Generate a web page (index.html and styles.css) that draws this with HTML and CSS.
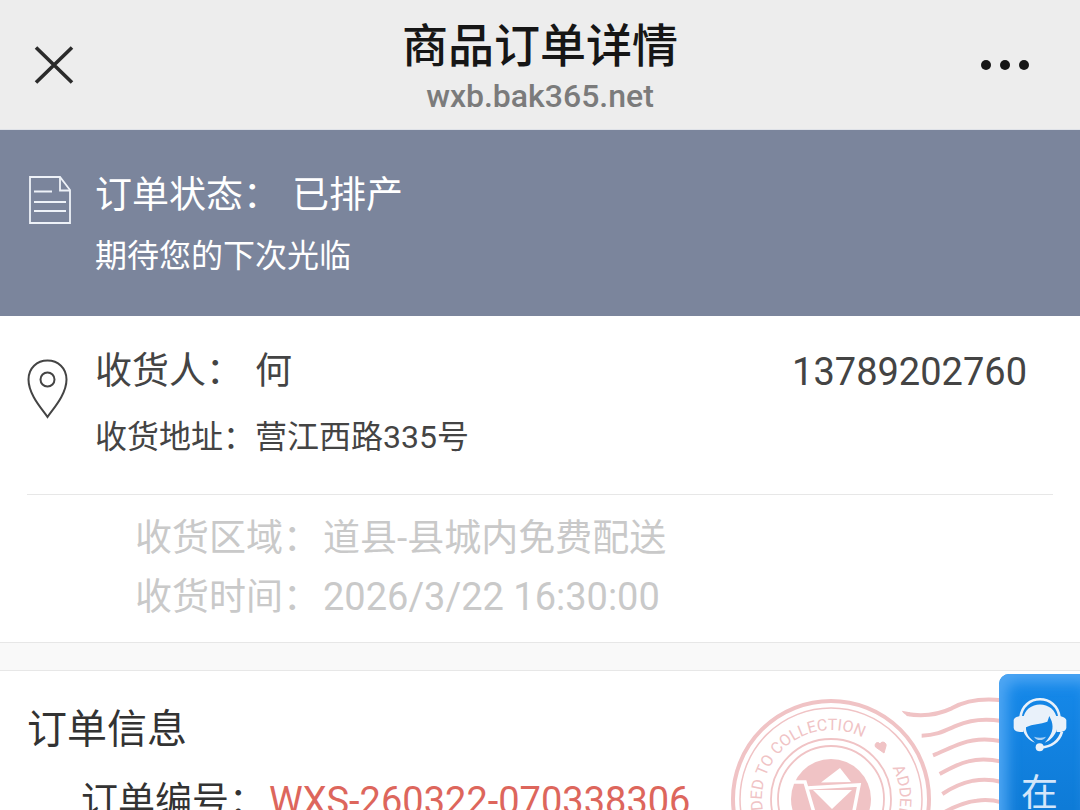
FILE: index.html
```html
<!DOCTYPE html>
<html lang="zh-CN">
<head>
<meta charset="utf-8">
<meta name="viewport" content="width=device-width, initial-scale=1">
<title>商品订单详情</title>
<link rel="stylesheet" href="styles.css">
</head>
<body>
<div class="app">
  <header class="navbar">
    <button class="nav-btn" type="button" aria-label="关闭">
      <svg width="40" height="40" viewBox="0 0 40 40" fill="none" stroke="#2b2b2b" stroke-width="3.6"><path d="M2 2.500L38 37.500M38 2.500L2 37.500"/></svg>
    </button>
    <div class="nav-center">
      <h1 class="nav-title">商品订单详情</h1>
      <p class="nav-host">wxb.bak365.net</p>
    </div>
    <button class="nav-btn" type="button" aria-label="更多">
      <svg width="50" height="12" viewBox="0 0 50 12" fill="#161616"><circle cx="6" cy="6" r="5"/><circle cx="25" cy="6" r="5"/><circle cx="44" cy="6" r="5"/></svg>
    </button>
  </header>

  <section class="status">
    <svg class="status-icon" width="44" height="50" viewBox="0 0 44 50" fill="none" stroke="#eef2f8" stroke-width="1.800">
      <path d="M2 2H32L42 15V48H2Z"/><path d="M32 2V15.500H42"/><path d="M6 16.500H24M6 27H38M6 36H38" stroke-width="2.200"/>
    </svg>
    <div class="status-body">
      <p class="line-lg"><span>订单状态：</span><span class="state">已排产</span></p>
      <p class="line-sm">期待您的下次光临</p>
    </div>
  </section>

  <section class="address">
    <svg class="pin-icon" width="42" height="60" viewBox="0 0 42 60" fill="none" stroke="#444" stroke-width="2">
      <path d="M20.500 58C16 51 1.500 36 1.500 20.500C1.500 9 10 1.500 20.500 1.500S39.500 9 39.500 20.500C39.500 36 25 51 20.500 58Z"/><circle cx="20.500" cy="20.500" r="7"/>
    </svg>
    <div class="address-body">
      <div class="receiver">
        <p class="line-lg"><span>收货人：</span><span>何</span></p>
        <span class="phone">13789202760</span>
      </div>
      <p class="line-sm">收货地址：营江西路335号</p>
    </div>
  </section>

  <dl class="delivery">
    <div class="pair"><dt>收货区域：</dt><dd>道县-县城内免费配送</dd></div>
    <div class="pair"><dt>收货时间：</dt><dd class="number">2026/3/22 16:30:00</dd></div>
  </dl>

  <section class="order">
    <svg class="stamp" width="360" height="220" viewBox="0 0 360 220" fill="none" stroke="#f0c3c5" aria-hidden="true">
      <defs><path id="ring" d="M111 178A69 69 0 0 1 111 40A69 69 0 0 1 111 178"/></defs>
      <circle cx="111" cy="109" r="98" stroke-width="4"/>
      <circle cx="111" cy="109" r="91" stroke-width="1.500"/>
      <circle cx="111" cy="109" r="60" stroke-width="1.800"/>
      <circle cx="111" cy="109" r="53" stroke-width="1.800"/>
      <circle cx="111" cy="109" r="40" fill="#f0c3c5" stroke="none"/>
      <path d="M70 92H85L95 126M87 98L139 95L133 126" stroke="#fff" stroke-width="3.500"/>
      <path d="M93 100H132L112 119Z" fill="#fff" stroke="none"/>
      <path d="M101 92.500L120 78L131 92Z" fill="#fff" stroke="none"/>
      <path d="M164 63L155.500 57C154 53 158 51 160 54C162 50 167 53 166 56Z" fill="#f0c3c5" stroke="#f0c3c5"/>
      <g class="stamp-text" stroke="none">
        <text><textPath href="#ring" startOffset="76">ADDED TO COLLECTION</textPath></text>
        <text><textPath href="#ring" startOffset="292">ADDED</textPath></text>
      </g>
      <g transform="translate(180 -30) scale(.3333)" stroke-width="12">
        <path d="M20 162C75 171 115 164 155 145C200 120 250 115 305 121"/>
        <path d="M5 152L30 157L30 169Q14 166 5 152Z" fill="#f0c3c5" stroke="none"/>
        <path d="M65 227C110 226 135 212 170 197C215 177 255 175 305 183"/>
        <path d="M99 286C130 274 150 262 185 250C225 236 260 235 305 244"/>
        <path d="M119 342C150 325 175 311 205 304C240 295 270 297 305 305"/>
        <path d="M127 402C160 380 190 368 220 362C250 357 275 358 305 366"/>
        <path d="M127 460C165 438 200 425 230 422C260 418 280 420 305 427"/>
      </g>
    </svg>
    <h2 class="order-title">订单信息</h2>
    <dl class="order-list">
      <div class="pair"><dt>订单编号：</dt><dd class="number order-no">WXS-260322-070338306</dd></div>
    </dl>
  </section>

  <button class="service" type="button">
    <svg width="56" height="56" viewBox="0 0 168 168" aria-hidden="true">
      <path d="M25 66C32 -9 136 -9 143 66" fill="none" stroke="#e9f1fa" stroke-width="8"/>
      <path d="M33 72C38 10 130 10 135 72C144 100 123 132 98 140C122 116 125 96 119 76L112 60L106 77C86 85 62 83 42 94C41 112 52 126 69 140C42 132 25 101 33 72Z" fill="#e9f1fa"/>
      <path d="M37 60C24 59 8 62 5 72V96C7 107 22 109 34 108ZM131 60C144 59 160 62 163 72V96C161 107 146 109 134 108Z" fill="#e9f1fa"/>
      <path d="M150 107C142 136 117 153 87 154" fill="none" stroke="#e9f1fa" stroke-width="8"/>
      <circle cx="83" cy="154" r="12" fill="#e9f1fa"/>
      <path d="M66 122Q84 128 102 122Q96 132 84 132Q72 132 66 122Z" fill="#a9d0f4"/>
    </svg>
    <span class="service-label">在</span>
  </button>
</div>
</body>
</html>
```
FILE: styles.css
```css
* { box-sizing: border-box; }

body, h1, h2, p, dl, dd { margin: 0; }

body {
  background: #fff;
  color: #444;
  font-family: Roboto, "Noto Sans CJK SC", sans-serif;
}

button {
  padding: 0;
  border: 0;
  background: none;
  font-family: inherit;
}

svg { display: block; flex: none; }

.app {
  position: relative;
  height: 100vh;
  overflow: hidden;
}

.navbar {
  display: flex;
  align-items: center;
  justify-content: space-between;
  height: 130px;
  padding: 0 34px;
  background: #ededed;
  border-bottom: 1px solid #dfe2e8;
}

.nav-btn {
  display: flex;
  align-items: center;
  width: 66px;
  height: 66px;
}

.nav-center {
  padding-top: 3px;
  text-align: center;
}

.nav-title {
  color: #161616;
  font-size: 46px;
  font-weight: 500;
  line-height: 60px;
}

.nav-host {
  color: #7b7b7b;
  font-size: 32px;
  font-weight: 500;
  line-height: 40px;
}

.status {
  display: flex;
  gap: 23px;
  padding: 36px 28px 30px;
  background: #7b859c;
  color: #fff;
}

.status-icon { margin-top: 9px; }

.line-lg {
  display: flex;
  gap: 12px;
  font-size: 37px;
  line-height: 60px;
}

.line-sm {
  font-size: 32px;
  line-height: 60px;
}

.address {
  display: flex;
  gap: 26px;
  margin: 0 27px;
  padding: 26px 0 27px;
  border-bottom: 1px solid #e7e7e7;
}

.pin-icon { margin-top: 17px; }

.address-body {
  display: flex;
  flex: 1;
  flex-direction: column;
  gap: 5px;
}

.receiver {
  display: flex;
  justify-content: space-between;
  padding-right: 26px;
}

.phone {
  font-size: 38px;
  line-height: 60px;
}

.delivery {
  padding: 14px 27px 15px 135px;
  border-bottom: 1px solid #e7e7e7;
  color: #c9c9c9;
}

.pair {
  display: flex;
  gap: 3px;
  font-size: 37px;
  line-height: 59px;
}

.number { font-size: 38px; }

.order {
  position: relative;
  padding: 0 27px;
  border-top: 27px solid #f9f9f9;
  color: #333;
  box-shadow: inset 0 1px #e7e7e7;
}

.order-title {
  padding-top: 30px;
  font-size: 40px;
  font-weight: 400;
  line-height: 60px;
}

.order-list { padding: 12px 0 0 54px; }

.order-no { color: #dd665c; }

.stamp {
  position: absolute;
  top: 20px;
  right: 0;
}

.stamp-text {
  fill: #f0c3c5;
  font-size: 16px;
}

.service {
  position: absolute;
  top: 674px;
  right: 0;
  display: flex;
  flex-direction: column;
  align-items: center;
  width: 81px;
  height: 240px;
  padding-top: 22px;
  border-radius: 10px 0 0 10px;
  background: linear-gradient(#1689ea, #0870c8);
  box-shadow: inset 8px 8px 14px #4fa6f3;
}

.service-label {
  color: #d3e6fa;
  font-size: 37px;
  line-height: 84px;
}
```
